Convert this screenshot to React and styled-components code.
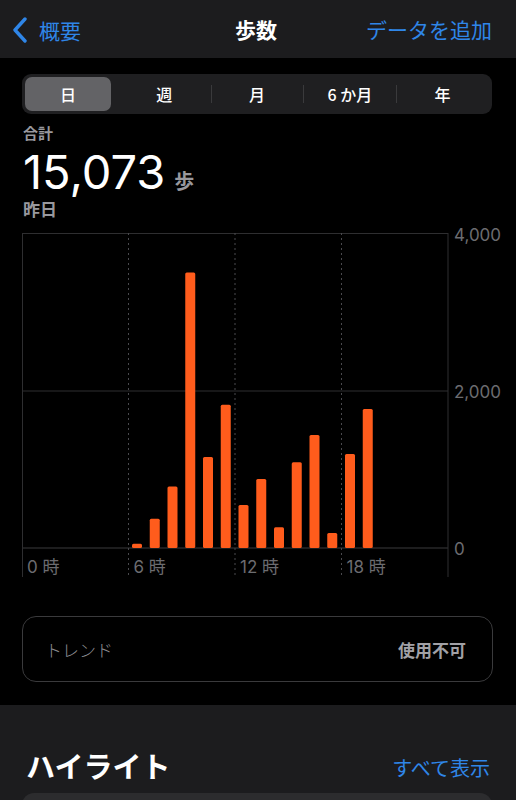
import React from 'react';
import styled, { createGlobalStyle } from 'styled-components';

const GlobalStyle = createGlobalStyle`
  html, body {
    margin: 0;
    padding: 0;
    background: #000;
  }
  body {
    font-family: "Noto Sans CJK JP", "Noto Sans", sans-serif;
    color: #fff;
  }
`;

const BLUE = '#2f86e8';

const hours = [
  0, 0, 0, 0, 0, 0, 55, 370, 780, 3500, 1155, 1820,
  545, 875, 265, 1090, 1435, 190, 1195, 1765, 0, 0, 0, 0,
];

const segments = ['日', '週', '月', '6 か月', '年'];

function App() {
  const chartW = 426;
  const base = 315;
  const hourW = chartW / 24;

  return (
    <>
      <GlobalStyle />
      <StPage>
        <StHeader>
          <StBack>
            <svg width="18" height="26" viewBox="0 0 18 26">
              <path d="M14 2 L4 13 L14 24" fill="none" stroke={BLUE} strokeWidth="3.4"
                strokeLinecap="round" strokeLinejoin="round" />
            </svg>
            <span>概要</span>
          </StBack>
          <StTitle>歩数</StTitle>
          <StLink>データを追加</StLink>
        </StHeader>

        <StSegmented>
          {segments.map((s, i) => (
            <StSegment key={s} $active={i === 0} $divider={i > 1}>{s}</StSegment>
          ))}
        </StSegmented>

        <StSummary>
          <StCaption>合計</StCaption>
          <StTotal>
            <StNumber>15,073</StNumber>
            <StUnit>歩</StUnit>
          </StTotal>
          <StCaption $big>昨日</StCaption>
        </StSummary>

        {/* viewBox starts above the top gridline so the 4,000 label has room */}
        <StChart width="494" height="356" viewBox="0 -10 494 356">
          <line x1="0" y1="0.5" x2={chartW} y2="0.5" stroke="#2e2e30" />
          <line x1="0" y1="158" x2={chartW} y2="158" stroke="#2e2e30" />
          <line x1="0" y1={base} x2={chartW} y2={base} stroke="#3a3a3c" />
          <line x1="0.5" y1="0" x2="0.5" y2="344" stroke="#2e2e30" />
          <line x1={chartW} y1="0" x2={chartW} y2="344" stroke="#2e2e30" />
          {[6, 12, 18].map((h) => (
            <line key={h} x1={h * hourW} y1="0" x2={h * hourW} y2="344"
              stroke="#4a4a4e" strokeDasharray="2 3" />
          ))}
          {hours.map((v, h) => {
            if (!v) return null;
            const bh = (v / 4000) * base;
            return (
              <rect key={h} x={h * hourW + 3.5} y={base - bh} width="10" height={bh}
                rx="1.5" fill="#ff5c1c" />
            );
          })}
          <StAxis x="432" y="8">4,000</StAxis>
          <StAxis x="432" y="165">2,000</StAxis>
          <StAxis x="432" y="322">0</StAxis>
          {[0, 6, 12, 18].map((h) => (
            <StAxis key={h} x={h * hourW + 5} y="340">{h} 時</StAxis>
          ))}
        </StChart>

        <StTrend>
          <StTrendLabel>トレンド</StTrendLabel>
          <StTrendValue>使用不可</StTrendValue>
        </StTrend>

        <StHighlights>
          <StHighlightsHead>
            <StSectionTitle>ハイライト</StSectionTitle>
            <StSeeAll>すべて表示</StSeeAll>
          </StHighlightsHead>
          <StHighlightCard />
        </StHighlights>
      </StPage>
    </>
  );
}

export default App;

const StPage = styled.div`
  width: 516px;
  height: 800px;
  overflow: hidden;
  background: #000;
`;

const StHeader = styled.header`
  height: 58px;
  background: #1c1c1e;
  display: grid;
  grid-template-columns: 1fr auto 1fr;
  align-items: center;
  padding: 0 24px 0 11px;
`;

const StBack = styled.div`
  display: flex;
  align-items: center;
  gap: 10px;
  color: ${BLUE};
  font-size: 21px;
  padding-top: 1px;
`;

const StTitle = styled.div`
  font-size: 21px;
  font-weight: 700;
  padding-left: 9px;
`;

const StLink = styled.div`
  justify-self: end;
  color: ${BLUE};
  font-size: 21px;
`;

const StSegmented = styled.div`
  margin: 16px 24px 0 22px;
  height: 40px;
  box-sizing: border-box;
  padding: 3px;
  border-radius: 9px;
  background: #1f1f21;
  display: grid;
  grid-template-columns: repeat(5, 1fr);
`;

const StSegment = styled.div`
  position: relative;
  display: flex;
  align-items: center;
  justify-content: center;
  font-size: 16px;
  font-weight: 500;
  color: #fff;
  border-radius: 7px;
  margin-right: ${(p) => (p.$active ? '7px' : '0')};
  background: ${(p) => (p.$active ? '#636366' : 'transparent')};
  &::before {
    content: '';
    display: ${(p) => (p.$divider ? 'block' : 'none')};
    position: absolute;
    left: 0;
    top: 8px;
    bottom: 8px;
    width: 1px;
    background: #3a3a3c;
  }
`;

const StSummary = styled.div`
  padding: 9px 0 0 23px;
  display: flex;
  flex-direction: column;
`;

const StCaption = styled.div`
  font-size: ${(p) => (p.$big ? '17px' : '15px')};
  font-weight: 700;
  color: #98989d;
  line-height: 20px;
`;

const StTotal = styled.div`
  display: flex;
  align-items: baseline;
  gap: 9px;
  height: 46px;
  margin: 6px 0 4px;
`;

const StNumber = styled.span`
  font-family: Inter, "Noto Sans", sans-serif;
  font-size: 47px;
  font-weight: 400;
  line-height: 46px;
`;

const StUnit = styled.span`
  font-size: 20px;
  font-weight: 700;
  color: #98989d;
  line-height: 24px;
`;

const StChart = styled.svg`
  display: block;
  margin: 4px 0 0 22px;
`;

const StAxis = styled.text`
  font-family: Inter, "Noto Sans CJK JP", sans-serif;
  font-size: 17px;
  fill: #6c6c70;
`;

const StTrend = styled.div`
  margin: 37px 23px 0 22px;
  height: 66px;
  box-sizing: border-box;
  border: 1.5px solid #3a3a3c;
  border-radius: 14px;
  display: flex;
  align-items: center;
  justify-content: space-between;
  padding: 0 26px 0 22px;
`;

const StTrendLabel = styled.span`
  font-size: 17px;
  font-weight: 300;
  color: #8e8e93;
`;

const StTrendValue = styled.span`
  font-size: 17px;
  font-weight: 700;
  color: #a1a1a6;
`;

const StHighlights = styled.section`
  margin-top: 23px;
  height: 200px;
  background: #1c1c1e;
  padding: 42px 26px 0 22px;
`;

const StHighlightsHead = styled.div`
  display: flex;
  align-items: center;
  justify-content: space-between;
  padding-left: 4px;
  height: 36px;
`;

const StSectionTitle = styled.h2`
  margin: 0;
  font-size: 29px;
  font-weight: 700;
  color: #fff;
`;

const StSeeAll = styled.span`
  font-size: 20px;
  color: ${BLUE};
  padding-top: 4px;
`;

const StHighlightCard = styled.div`
  margin-top: 10px;
  height: 60px;
  border-radius: 12px;
  background: #2c2c2e;
  margin-right: -2px;
`;
